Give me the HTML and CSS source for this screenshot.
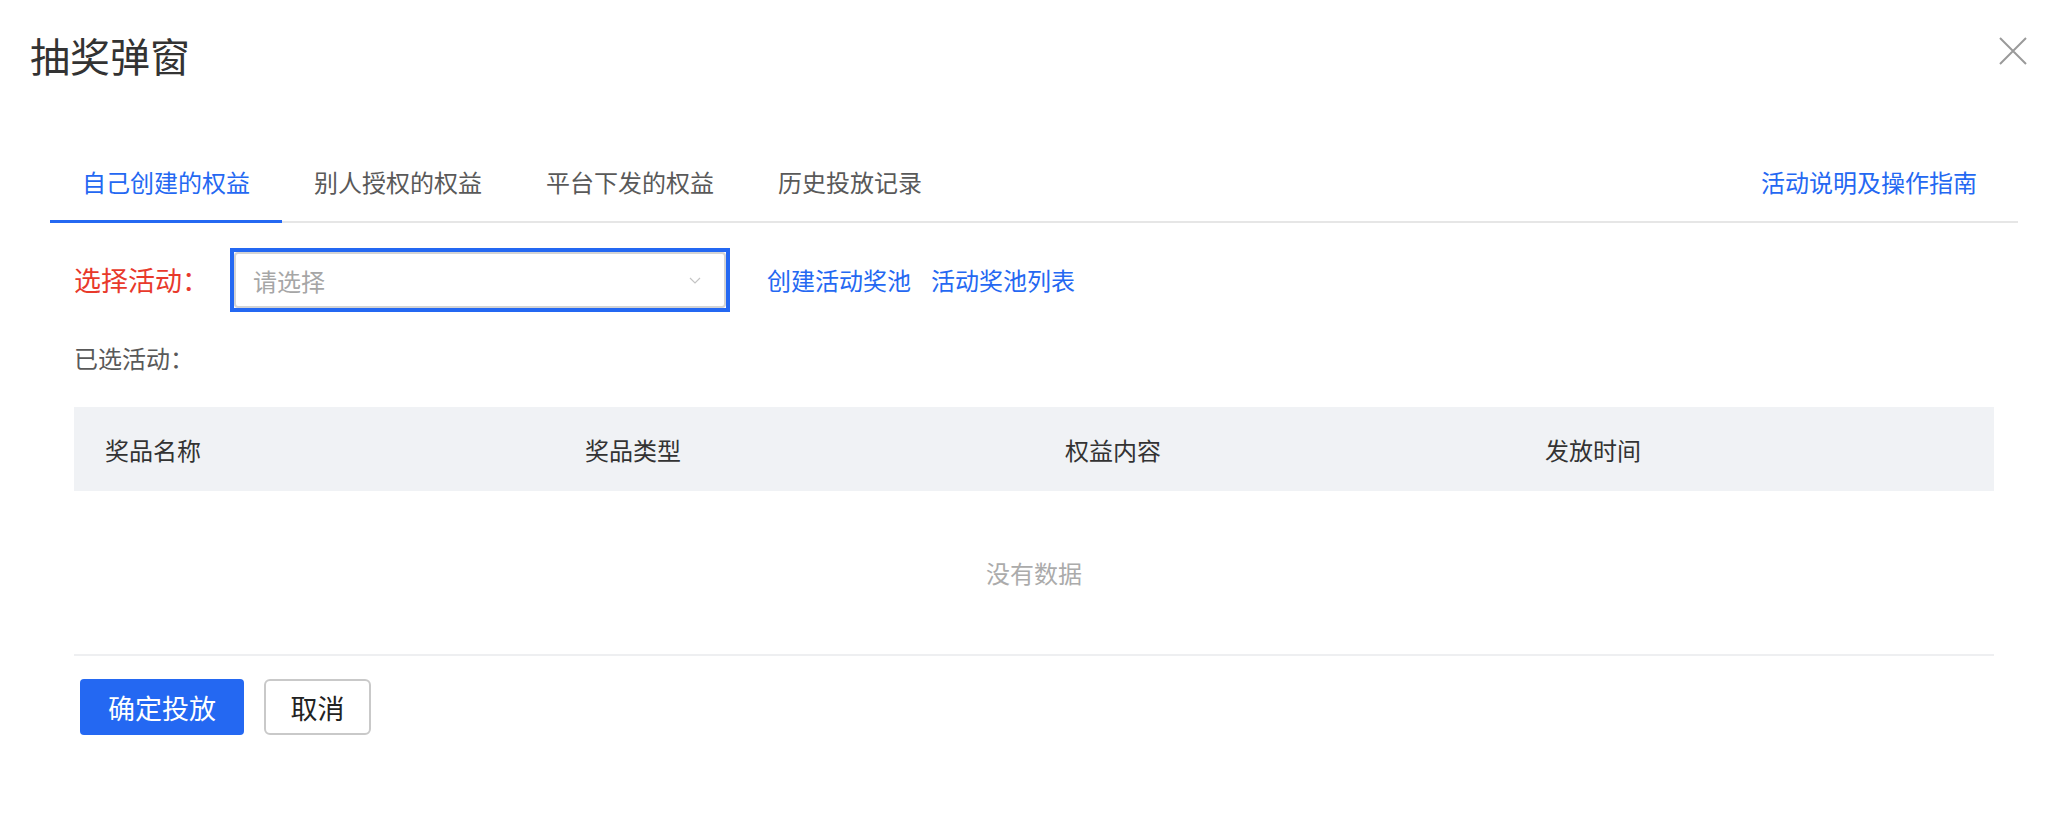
FILE: index.html
```html
<!DOCTYPE html>
<html lang="zh-CN">
<head>
    <meta charset="UTF-8">
    <meta name="viewport" content="width=device-width, initial-scale=1.0">
    <title>抽奖弹窗</title>
    <link rel="stylesheet" href="styles.css">
</head>
<body>

    <div class="dialog">
        <div class="dialog-header">
            <h2 class="dialog-title">抽奖弹窗</h2>
            <button class="close-btn" aria-label="关闭">
                <svg width="28" height="28" viewBox="0 0 28 28">
                    <path d="M1 1 L27 27 M27 1 L1 27" stroke="#9a9a9a" stroke-width="2" fill="none"/>
                </svg>
            </button>
        </div>

        <div class="tabs">
            <div class="tab active">自己创建的权益</div>
            <div class="tab">别人授权的权益</div>
            <div class="tab">平台下发的权益</div>
            <div class="tab">历史投放记录</div>
            <a class="guide-link" href="#">活动说明及操作指南</a>
        </div>

        <div class="form-row">
            <label class="form-label">选择活动：</label>
            <div class="select-focus">
                <div class="select">
                    <span class="placeholder">请选择</span>
                    <svg class="arrow" width="12" height="7" viewBox="0 0 12 7">
                        <path d="M1 1 L6 6 L11 1" stroke="#c4c4c4" stroke-width="1.2" fill="none"/>
                    </svg>
                </div>
            </div>
            <a class="link" href="#">创建活动奖池</a>
            <a class="link" href="#">活动奖池列表</a>
        </div>

        <div class="selected">已选活动：</div>

        <table class="prize-table">
            <thead>
                <tr>
                    <th>奖品名称</th>
                    <th>奖品类型</th>
                    <th>权益内容</th>
                    <th>发放时间</th>
                </tr>
            </thead>
            <tbody>
                <tr>
                    <td class="empty" colspan="4">没有数据</td>
                </tr>
            </tbody>
        </table>

        <div class="actions">
            <button class="btn btn-primary">确定投放</button>
            <button class="btn btn-default">取消</button>
        </div>
    </div>

</body>
</html>
```

FILE: styles.css
```css
body { margin: 0; background: #fff; font-family: "Noto Sans CJK SC", "Noto Sans", sans-serif; color: #333; }
a { text-decoration: none; }

.dialog { width: 2064px; }

.dialog-header { height: 110px; display: flex; align-items: center; justify-content: space-between; padding: 0 37px 0 30px; }
.dialog-title { margin: 0; font-size: 40px; font-weight: normal; line-height: 56px; color: #333; }
.close-btn { border: none; background: none; padding: 0; margin-top: -8px; width: 28px; height: 28px; cursor: pointer; }
.close-btn svg { display: block; }

.tabs { display: flex; align-items: flex-end; margin: 34px 46px 0 50px; border-bottom: 2px solid #e6e6e6; }
.tab { height: 76px; line-height: 76px; padding: 0 32px; font-size: 24px; color: #595959; border-bottom: 3px solid transparent; margin-bottom: -2px; cursor: pointer; }
.tab.active { color: #2468f2; border-bottom-color: #2468f2; }
.guide-link { margin-left: auto; margin-right: 41px; height: 76px; line-height: 76px; margin-bottom: 1px; font-size: 24px; color: #2468f2; }

.form-row { display: flex; align-items: center; margin-top: 25px; padding-left: 74px; }
.form-label { font-size: 27px; color: #e8392b; margin-right: 21px; line-height: 36px; }
.select-focus { border: 4px solid #2468f2; }
.select { width: 492px; height: 56px; box-sizing: border-box; border: 2px solid #d4d4d4; border-radius: 4px; display: flex; align-items: center; justify-content: space-between; padding: 0 23px 0 17px; }
.placeholder { font-size: 24px; color: #a6a6a6; }
.arrow { display: block; }
.link { font-size: 24px; color: #2468f2; line-height: 36px; }
.select-focus + .link { margin-left: 37px; }
.link + .link { margin-left: 20px; }

.selected { margin-top: 29px; padding-left: 74px; font-size: 24px; line-height: 34px; color: #595959; }

.prize-table { margin: 32px 0 0 74px; width: 1920px; border-collapse: collapse; table-layout: fixed; }
.prize-table th { height: 84px; padding: 0 0 0 31px; background: #f0f2f5; text-align: left; font-weight: normal; font-size: 24px; color: #333; }
.prize-table td.empty { height: 163px; text-align: center; font-size: 24px; color: #ababab; border-bottom: 2px solid #eeeff1; padding: 0; }

.actions { display: flex; gap: 20px; margin-top: 23px; padding-left: 80px; }
.btn { height: 56px; box-sizing: border-box; font-family: inherit; font-size: 27px; padding: 0; cursor: pointer; }
.btn-primary { width: 164px; background: #2468f2; color: #fff; border: none; border-radius: 4px; }
.btn-default { width: 107px; background: #fff; color: #222; border: 2px solid #c9c9c9; border-radius: 6px; }
```
